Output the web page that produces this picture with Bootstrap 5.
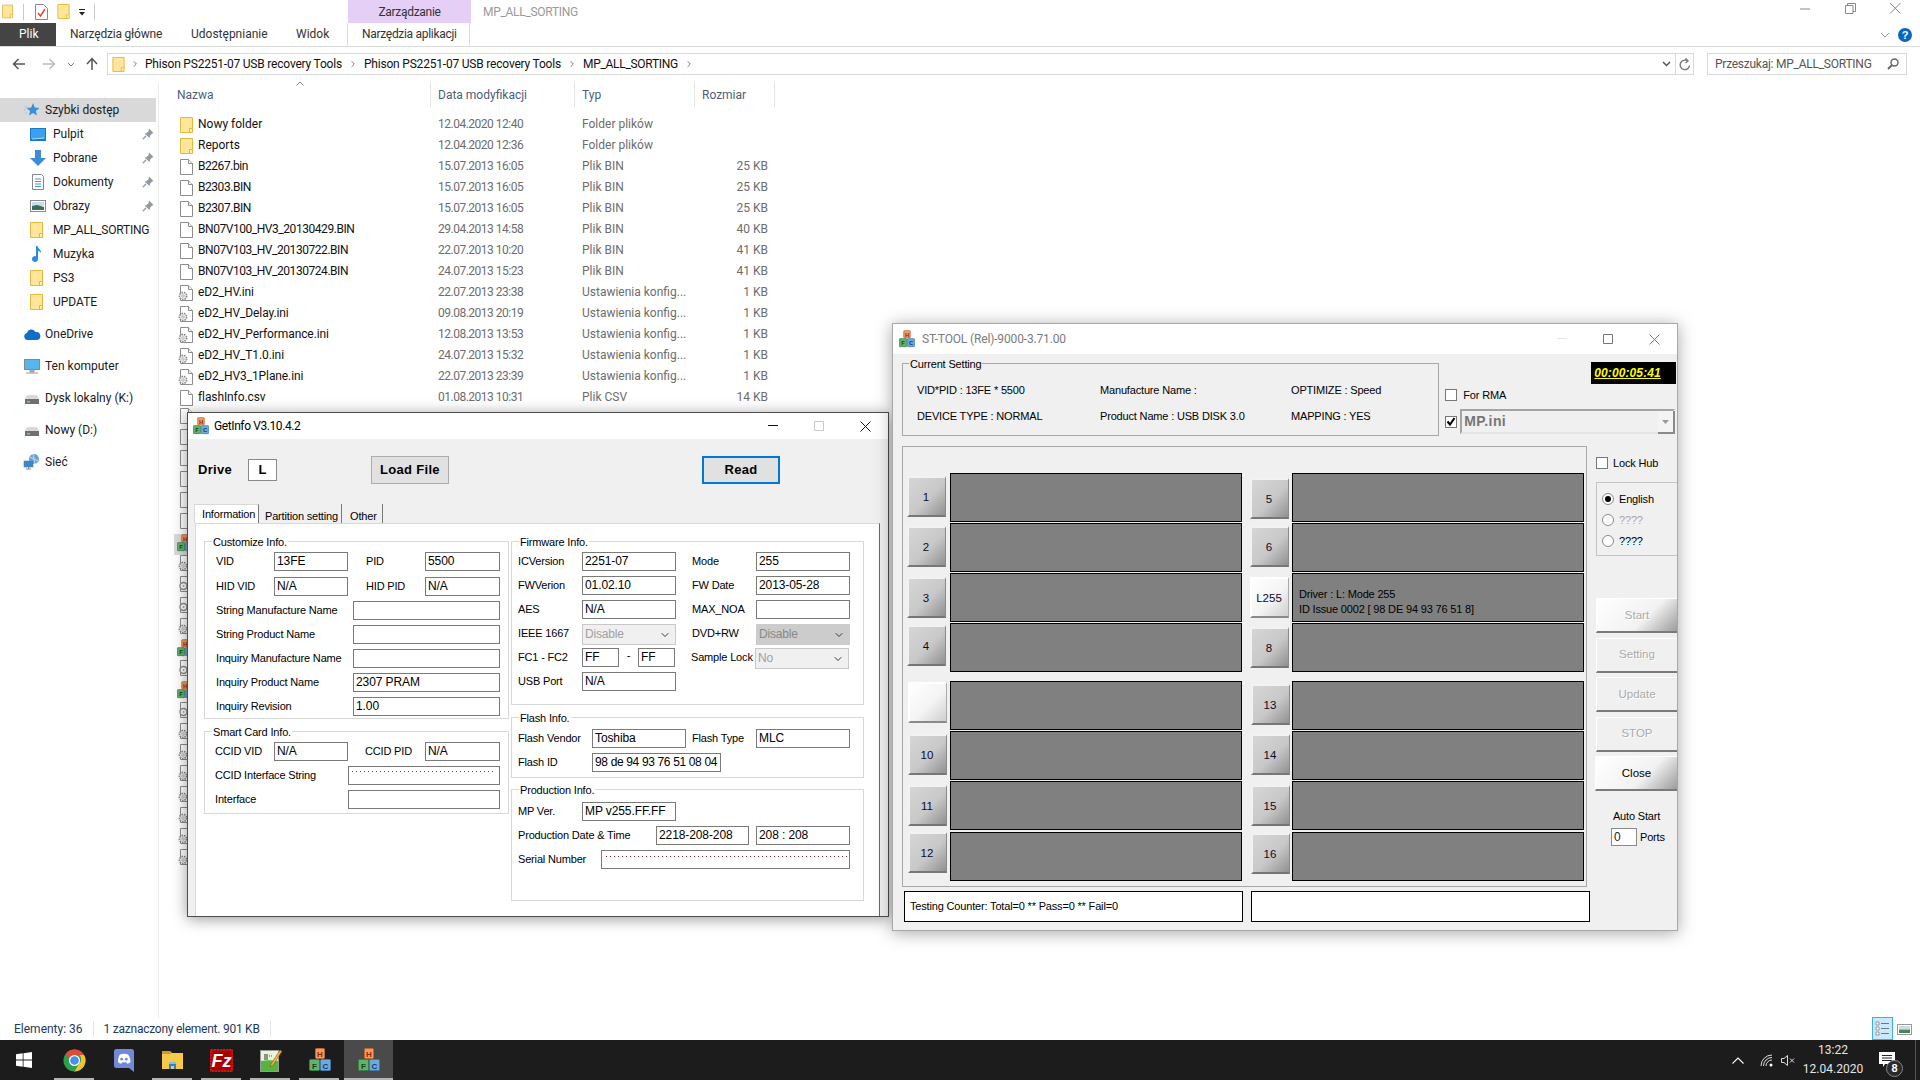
<!DOCTYPE html>
<html lang="pl">
<head>
<meta charset="UTF-8">
<title>MP_ALL_SORTING</title>
<link href="https://cdn.jsdelivr.net/npm/bootstrap@5.3.3/dist/css/bootstrap.min.css" rel="stylesheet">
<style>
html,body{width:1920px;height:1080px;overflow:hidden}
body{position:relative;background:#fff;color:#000;font:12px/16px Roboto,sans-serif}
svg{display:block;flex:none;overflow:visible}
.ml-2{margin-left:2px}
.ml-8{margin-left:8px}
.ml-9{margin-left:9px}
.ml-10{margin-left:10px}
.ml-11{margin-left:11px}
.ml-12{margin-left:12px}
.ml-16{margin-left:16px}
.tgt1{letter-spacing:-.2px}
.tgt2{letter-spacing:-.3px}

/* explorer chrome */
.ex-top{height:23px}
.ex-sep{width:1px;height:16px;background:#c8c8c8}
.ex-ctx{width:123px;height:23px;margin-left:253px;background:#e6cff7;color:#333;letter-spacing:-.3px}
.ex-title{margin-left:12px;color:#999;letter-spacing:-.3px}
.ex-wc{width:45px;height:23px}
.ex-wc-wrap{margin-right:2px;margin-top:-3px}
.ex-ribbon{height:24px;border-bottom:1px solid #dadbdc}
.ex-ribbon .nav-link{height:23px;padding:3px 0 0 14px;color:#333;font-size:12px;border:0}
.rb-file{width:56px;background:#444;color:#fff!important;padding-left:19px!important}
.rb-w1{width:121px;letter-spacing:-.2px}
.rb-w2{width:105px}
.rb-w3{width:65px}
.rb-ctx{width:123px;padding-left:14px!important;letter-spacing:-.3px;border-left:1px solid #dadbdc!important;border-right:1px solid #dadbdc!important}
.ex-addr{height:35px;padding-top:6px}
.ex-nav{width:107px;height:22px}
.ad-box{width:1587px;height:22px;border:1px solid #d9d9d9;color:#111;padding-left:4px}
.ad-end{width:18px;height:20px;border-left:1px solid #d9d9d9}
.ad-search{width:200px;height:22px;margin-left:13px;border:1px solid #d9d9d9;padding:0 7px;color:#555;letter-spacing:-.25px}
.ex-main{height:936px}
.ex-side{width:159px;padding-top:16px;border-right:1px solid #ececec;flex:none}
.sd-list .list-group-item{height:24px;width:156px;padding:0;border:0;background:transparent;color:#1b1b1b;font-size:12px;display:flex;align-items:center}
.sd-list .sd-on{background:#d9d9d9}
.sd-top{margin-top:8px}
.sd-l1{padding-left:30px!important}
.sd-l1 svg:first-child{margin-right:7px}
.sd-list .sd-l1 .sd-ic13{margin-right:10px}
.sd-list .sd-l1 .sd-ic14{margin-right:9px}
.sd-l0{padding-left:24px!important}
.sd-l0 svg:first-child{margin-right:5px}
.sd-pin{margin-left:auto;margin-right:2px}
.ex-files{position:relative;margin-left:15px}
.fh-row{height:25px;color:#4c607a}
.fh-c{border-right:1px solid #e5e5e5;line-height:26px;padding-left:7px}
.fh-c1{width:257px;padding-left:3px}
.fh-c2{width:144px}
.fh-c3{width:120px}
.fh-c4{width:80px}
.fh-caret{position:absolute;left:122px;top:-1px}
.flist{width:601px;table-layout:fixed;margin:7px 0 0;--bs-table-bg:transparent}
.flist>tbody>tr>td{padding:0 0 0 7px;height:21px;line-height:21px;color:#6d6d6d;border:0;white-space:nowrap;font-size:12px}
.flist>tbody>tr>td.fn{width:257px;padding-left:6px;color:#111}
.flist>tbody>tr>td.fd{letter-spacing:-.5px}
.flist>tbody>tr>td.fz{padding:0 7px 0 0;text-align:right}
.flist>tbody>tr.fsel>td{background:#d9d9d9}
.fcol2{width:144px}
.fcol3{width:120px}
.fn-in{display:flex;align-items:center;gap:5px}
.fn-b{letter-spacing:-.45px}
.fn-e{letter-spacing:-.1px}
.ic-neg{margin-left:-3px}
.ic-gear{margin-left:-2px}
.ex-status{height:22px;padding-left:14px;color:#1e395b}
.st-sep{width:1px;height:16px;background:#e5e5e5;margin:0 10px}
.st-msg{letter-spacing:-.25px}
.st-views{margin-left:auto;margin-right:8px}
.st-view-on{width:21px;height:23px;background:#cce8ff;border:1px solid #3daee9;margin-top:-1px}
.ex-task{height:40px;background:#1c1c1c;color:#e4e4e4}
.tb-start{width:50px;padding-left:16px}
.tb-slot{width:49px;height:40px;position:relative}
.tb-on{background:#4a4a4a}
.tb-run::after{content:"";position:absolute;left:4px;right:5px;bottom:0;height:2px;background:#b5b5b5}
.tb-on::after{left:0;right:0}
.tb-tray{margin-left:auto}
.tb-clock{width:70px;text-align:center;line-height:19px;margin:0 11px 0 3px}
.tb-bell{position:relative;width:30px;height:40px;margin-right:6px}
.tb-bubble{position:absolute;left:0;top:12px}
.tb-badge{position:absolute;left:7px;top:20px;width:17px;height:17px;border-radius:50%;background:#2a2a2a;border:1px solid #888;color:#fff;font:700 11px/15px "Liberation Sans",sans-serif;text-align:center}
.tb-peek{width:1px;height:40px;background:#555;margin-right:4px}

/* windows */
.wf-win{position:absolute;background:#f0f0f0;font:11px/14px "Liberation Sans",sans-serif;letter-spacing:-.17px;z-index:5}
.wf-gi{left:187px;top:412px;width:702px;height:505px;border:1px solid #4d4d4d;box-shadow:0 2px 14px rgba(0,0,0,.4)}
.wf-st{left:892px;top:323px;width:786px;height:608px;border:1px solid #a8a8a8;box-shadow:0 2px 16px rgba(0,0,0,.35)}
.wf-bar{background:#fff;font:12px/16px Roboto,sans-serif}
.wf-gi .wf-bar{height:26px;padding-left:5px;gap:5px;letter-spacing:-.4px}
.wf-st .wf-bar{height:30px;padding-left:6px;gap:7px;color:#7c7c7c;letter-spacing:-.15px}
.wf-wc{width:46px;height:24px}
.wf-bar-wc{margin-left:auto}

/* getinfo */
.gi-top{height:62px;margin-bottom:3px;padding-left:10px}
.gi-drive{width:50px;font:700 13px/16px "Liberation Sans",sans-serif;letter-spacing:.3px}
.gi-l{width:29px;height:22px;background:#fff;border:1px solid #8a8a8a;font:700 13px/20px "Liberation Sans",sans-serif;text-align:center}
.btn.gi-btn{width:78px;height:28px;padding:0;border-radius:0;background:#e1e1e1;border:1px solid #adadad;color:#000;font:700 13px/26px "Liberation Sans",sans-serif;letter-spacing:.3px}
.gi-load{margin-left:94px}
.btn.gi-read{margin-left:253px;border:2px solid #0078d7;line-height:24px}
.gi-tabs{margin-left:6px;height:19px;border:0;gap:1px;--bs-nav-tabs-border-width:0}
.gi-tabs .nav-link{height:19px;margin:0;padding:5px 0 0 5px;border:0;border-right:1px solid #777;border-radius:0;background:#f0f0f0;color:#000;font-size:11px;white-space:nowrap}
.gi-tabs .nav-link.active{background:#fff;padding:2px 0 0 7px;border-top:1px solid #d9d9d9;border-left:1px solid #d9d9d9;border-right-color:#777;border-bottom:0;color:#000}
.gi-t1{width:65px}
.gi-t2{width:82px}
.gi-tabs .nav-link.gi-t3{width:40px;padding-left:7px}
.gi-panel{width:685px;height:393px;margin-left:7px;background:#fff;border-top:1px solid #d9d9d9;border-left:1px solid #d9d9d9;border-right:1px solid #696969;padding:17px 0 0 8px;gap:2px}
.gi-left{width:305px}
.gi-right{width:353px}
.wf-group{position:relative;border:1px solid #d8d8d8}
.wf-legend{position:absolute;top:-7px;left:7px;padding:0 1px;background:#fff}
.g-cust{height:178px;padding:10px 0 0 11px;margin-bottom:12px}
.g-smart{height:83px;padding:10px 0 0 10px}
.g-firm{height:164px;padding:10px 0 0 6px;margin-bottom:12px}
.g-flash{height:61px;padding:11px 0 0 6px;margin-bottom:11px}
.g-prod{height:112px;padding:12px 0 0 6px}
.fr{height:19px;margin-bottom:5px}
.fr1{margin-bottom:6px}
.fl{flex:none;margin-top:-2px}
.form-control.wf-in{flex:none;height:19px;min-height:0;padding:1px 2px 0;border:1px solid #7a7a7a;border-radius:0;background:#fff;color:#000;font:12px/15px "Liberation Sans",sans-serif;letter-spacing:-.1px;white-space:nowrap}
.form-select.wf-sel{flex:none;height:21px;min-height:0;padding:2px 2px 0;border:1px solid #c8c8c8;border-radius:0;background-color:#f0f0f0;background-position:right 5px center;background-size:10px 8px;color:#a0a0a0;font:12px/15px "Liberation Sans",sans-serif}
.form-select.wf-sel-on{background-color:#ccc;color:#888;border-color:#ccc}
.form-control.wf-in.wf-dots{background:#fff repeating-linear-gradient(90deg,#444 0 1px,transparent 1px 4px) no-repeat 3px 4px/143px 1px}
.form-control.wf-in.wf-dots2{background:#fff repeating-linear-gradient(90deg,#802030 0 1px,transparent 1px 4px) no-repeat 4px 5px/241px 1px}
.form-control.wf-tight{letter-spacing:-.35px}
.ml16{margin-left:16px}
.ml18{margin-left:18px}
.ml17{margin-left:17px}
.ml6{margin-left:6px}
.ml7{margin-left:7px}
.w37{width:37px}
.w58{width:58px}
.w59{width:59px}
.w60{width:60px}
.w64{width:64px}
.w74{width:74px}
.w75{width:75px}
.w93{width:93px}
.w94{width:94px}
.w129{width:129px}
.w133{width:133px}
.w137{width:137px}
.w138{width:138px}
.w147{width:147px}
.w152{width:152px}
.w249{width:249px}
.w83{width:83px}
.wf-dash{width:19px;text-align:center}

/* st-tool */
.st-body{padding:9px 0 0 9px}
.st-top{height:83px}
.st-cur{width:538px;height:73px;padding:17px 0 0 14px;background:#f0f0f0;border:1px solid #a8a8a8}
.st-cur .wf-legend{background:#f0f0f0;left:6px;top:-7px}
.st-tr{height:18px;margin-bottom:8px}
.st-c1{width:183px}
.st-c2{width:191px}
.st-side{width:232px;margin-left:6px}
.st-timer{width:85px;height:22px;margin:-1px 0 0 146px;background:#000;color:#ff0;font:italic 700 12px/22px "Liberation Sans",sans-serif;text-decoration:underline;padding-left:3px;letter-spacing:.1px}
.st-rma{margin-top:5px;height:11px;gap:6px}
.form-check-input.wf-chk{width:12px;height:12px;margin:0;flex:none;border:1px solid #777;border-radius:0;background-color:#fff;box-shadow:none;float:none}
.form-check-input.wf-chk:checked{background-color:#fff;border-color:#777;background-image:url("data:image/svg+xml,%3csvg xmlns='http://www.w3.org/2000/svg' viewBox='0 0 12 12'%3e%3cpath fill='none' stroke='%23000' stroke-width='2' d='M2.5 5.5l2.5 3 4.5-6.5'/%3e%3c/svg%3e");background-size:12px}
.form-check-input.wf-rad{width:12px;height:12px;margin:0;flex:none;border:1px solid #8a8a8a;background-color:#fff;box-shadow:none;float:none}
.form-check-input.wf-rad:checked{background-color:#fff;border-color:#8a8a8a;background-image:url("data:image/svg+xml,%3csvg xmlns='http://www.w3.org/2000/svg' viewBox='-4 -4 8 8'%3e%3ccircle r='2' fill='%23000'/%3e%3c/svg%3e");background-size:12px}
.st-mp{margin-top:9px;gap:3px}
.st-combo{width:215px;height:25px;border:2px solid #a4a4a4;border-bottom-color:#e4e4e4;border-right-color:#e4e4e4;color:#777;font:700 14px/21px "Liberation Sans",sans-serif;padding-left:2px;letter-spacing:.4px}
.st-combo-btn{width:17px;height:23px;margin-left:auto;margin-right:-2px;background:#f4f4f4;border-right:2px solid #8a8a8a;border-bottom:2px solid #8a8a8a}
.st-mid{height:441px}
.st-panel{width:685px;padding:26px 0 0 4px;border:1px solid #a8a8a8;background:#f0f0f0}
.pt-row{gap:8px;margin-bottom:1px}
.pt-gap{margin-top:9px}
.pt-last{margin-top:2px}
.pt-l{width:335px}
.pt-r{width:334px}
.pt-box{width:292px;height:49px;background:gray;border:1.5px solid #000;color:#000;padding:13px 0 0 6px;line-height:15px;font-size:11px}
.btn.pt-btn{width:39px;height:41px;padding:0 2px 0 0;border-radius:0;border:0;border-top:2px solid #f2f2f2;border-left:2px solid #f2f2f2;border-bottom:2px solid #777;border-right:1px solid #8a8a8a;background:linear-gradient(135deg,#d6d6d6 0,#c8c8c8 55%,#909090 100%);color:#100828;font:11.5px/39px "Liberation Sans",sans-serif}
.btn.pt-on{background:linear-gradient(135deg,#fff 0,#f4f4f4 55%,#cfcfcf 100%);border-color:#fff #aaa #8a8a8a #fff}
.ot0{margin-top:0}
.ot1{margin-top:1px}
.ot2{margin-top:2px}
.ot3{margin-top:3px}
.ot4{margin-top:4px}
.ot5{margin-top:5px}
.ob1{margin-left:1px}
.st-right{width:81px;margin-left:9px;padding-top:11px}
.st-lock{height:12px;gap:5px}
.st-radios{width:81px;height:74px;margin-top:13px;border:1px solid #c4c4c4;border-right:0;padding:5px 0 0 5px}
.st-radio{height:21px;gap:5px}
.st-off{color:#a8a8a8}
.st-btns{margin-top:42px;gap:4.5px}
.btn.sb-btn{width:81px;height:35px;padding:0;border-radius:0;border:0;border-top:1px solid #fff;border-left:1px solid #fff;border-bottom:2px solid #7a7a7a;background:#f0f0f0;color:#aaa;font:11.5px/31px "Liberation Sans",sans-serif;text-shadow:1px 1px 0 #fff;opacity:1}
.btn.sb-grad{background:linear-gradient(135deg,#fff 0,#f2f2f2 60%,#9c9c9c 100%)}
.btn.sb-close{color:#000;text-shadow:none;width:82px;margin-left:-1px}
.st-auto{margin-top:18px;text-align:center}
.st-auto-r{margin-top:5px;padding-left:15px;gap:3px}
.form-control.st-port{width:26px;height:18px;min-height:0;padding:0 2px;border:1px solid #8a8a8a;border-radius:0;font:12px/16px "Liberation Sans",sans-serif;background:#fff}
.st-counts{margin:4px 0 0 2px;gap:8px}
.st-count{width:339px;height:31px;background:#fff;border:1px solid #000;padding-left:5px;line-height:29px}
</style>
</head>
<body class="d-flex flex-column">

<svg width="0" height="0" class="position-absolute">
  <symbol id="i-folder" viewBox="0 0 13 16"><path d="M.5.5h12v15H.5z" fill="#ffe69b" stroke="#e5b73c"/><path d="M9.5 15.500v-4h3" fill="#fff6d8" stroke="#e5b73c"/></symbol>
  <symbol id="i-file" viewBox="0 0 13 16"><path d="M.5.5h8l4 4v11H.5z" fill="#fff" stroke="#8c8c8c"/><path d="M8.5.5v4h4" fill="#f2f2f2" stroke="#8c8c8c"/></symbol>
  <symbol id="i-ini" viewBox="0 0 15 16"><path d="M2.5.5h8l4 4v11h-12z" fill="#fff" stroke="#8c8c8c"/><path d="M10.5.5v4h4" fill="#f2f2f2" stroke="#8c8c8c"/><circle cx="5" cy="11" r="3.600" fill="#eee" stroke="#888" stroke-width="1.600" stroke-dasharray="1.500 1"/><circle cx="5" cy="11" r="1.200" fill="#fff" stroke="#999" stroke-width=".7"/></symbol>
  <symbol id="i-ring" viewBox="0 0 15 16"><path d="M2.5.5h8l4 4v11h-12z" fill="#fff" stroke="#8c8c8c"/><path d="M10.5.5v4h4" fill="#f2f2f2" stroke="#8c8c8c"/><circle cx="5.500" cy="10" r="3.500" fill="#fff" stroke="#8c8c8c" stroke-width="1.400"/><circle cx="5.500" cy="10" r="1" fill="#aaa"/></symbol>
  <symbol id="i-mfc" viewBox="0 0 22 24">
    <rect x="6.500" y=".5" width="9" height="10" rx="1" fill="#f59a5c" stroke="#b96a2e"/><rect x=".5" y="11.500" width="10" height="11" rx="1" fill="#63b26b" stroke="#3b7d44"/><rect x="11.500" y="11.500" width="10" height="11" rx="1" fill="#6fa8dc" stroke="#3f78b0"/>
    <text x="11" y="9" font-size="8" font-weight="700" text-anchor="middle" fill="#8a2a10" font-family="Liberation Sans">H</text>
    <text x="5.500" y="20.500" font-size="8" font-weight="700" text-anchor="middle" fill="#123f18" font-family="Liberation Sans">F</text>
    <text x="16.500" y="20.500" font-size="8" font-weight="700" text-anchor="middle" fill="#123a66" font-family="Liberation Sans">C</text>
  </symbol>
  <symbol id="i-pin" viewBox="0 0 12 12"><path d="M7 .5l4.500 4.500-1.300.5-2.200 2.200-.3 2.300L2.300 5.500l2.300-.3 2-2.200z" fill="#8f9aa3"/><path d="M4 8L.8 11.200" stroke="#8f9aa3" stroke-width="1.300"/></symbol>
  <symbol id="i-drive" viewBox="0 0 16 16"><path d="M3 5h10l2 4H1z" fill="#d9d9d9"/><rect x="1" y="9" width="14" height="5" fill="#6f6f6f"/><rect x="3" y="11" width="3" height="1.500" fill="#62e06a"/></symbol>
  <symbol id="i-chev" viewBox="0 0 6 10"><path d="M1 1l4 4-4 4" fill="none" stroke="#555" stroke-width="1.200"/></symbol>
</svg>

<!-- explorer title row -->
<div class="ex-top d-flex align-items-start">
  <svg width="11" height="15" class="mt-1 ml-2"><use href="#i-folder"/></svg>
  <div class="ex-sep mt-1 ml-10"></div>
  <svg width="13" height="16" class="mt-1 ml-11" viewBox="0 0 13 16"><path d="M.5.5h8l4 4v11H.5z" fill="#fff" stroke="#888"/><path d="M3 9l2.500 3L10 5" fill="none" stroke="#d9442a" stroke-width="1.400"/></svg>
  <svg width="13" height="15" class="mt-1 ml-9"><use href="#i-folder"/></svg>
  <svg width="8" height="8" class="mt-2 ml-8" viewBox="0 0 8 8"><path d="M1 1.500h6" stroke="#222"/><path d="M1 4h6L4 7.500z" fill="#222"/></svg>
  <div class="ex-sep mt-1 ml-8"></div>
  <div class="ex-ctx text-center pt-1">Zarządzanie</div>
  <div class="ex-title pt-1">MP_ALL_SORTING</div>
  <div class="d-flex ms-auto ex-wc-wrap">
    <div class="ex-wc d-flex align-items-center justify-content-center"><svg width="11" height="11"><path d="M0 6h10" stroke="#888"/></svg></div>
    <div class="ex-wc d-flex align-items-center justify-content-center"><svg width="11" height="11"><path d="M.5 2.500h7.500v8h-7.500zM2.500 2.500v-2h8v8h-2.500" fill="none" stroke="#888"/></svg></div>
    <div class="ex-wc d-flex align-items-center justify-content-center"><svg width="11" height="11"><path d="M0 0l10.500 10.500M10.500 0L0 10.500" stroke="#888"/></svg></div>
  </div>
</div>

<!-- ribbon -->
<div class="ex-ribbon d-flex">
  <nav class="nav flex-nowrap">
    <a class="nav-link rb-file" href="#">Plik</a>
    <a class="nav-link rb-w1" href="#">Narzędzia główne</a>
    <a class="nav-link rb-w2" href="#">Udostępnianie</a>
    <a class="nav-link rb-w3" href="#">Widok</a>
    <a class="nav-link rb-ctx" href="#">Narzędzia aplikacji</a>
  </nav>
  <div class="d-flex align-items-center ms-auto">
    <svg width="10" height="6" viewBox="0 0 10 6" class="me-2"><path d="M1 1l4 4 4-4" fill="none" stroke="#999"/></svg>
    <svg width="14" height="14" viewBox="0 0 14 14" class="me-2"><circle cx="7" cy="7" r="7" fill="#0a66c2"/><text x="7" y="11" font-size="11" font-weight="700" fill="#fff" text-anchor="middle" font-family="Liberation Sans">?</text></svg>
  </div>
</div>

<!-- address row -->
<div class="ex-addr d-flex align-items-start">
  <div class="ex-nav d-flex align-items-center">
    <svg width="14" height="12" viewBox="0 0 14 12" class="ml-12"><path d="M13 6H2M6.500 1L1.500 6l5 5" fill="none" stroke="#555" stroke-width="1.500"/></svg>
    <svg width="14" height="12" viewBox="0 0 14 12" class="ml-16"><path d="M1 6h11M7.500 1l5 5-5 5" fill="none" stroke="#bbb" stroke-width="1.500"/></svg>
    <svg width="8" height="5" viewBox="0 0 8 5" class="ml-11"><path d="M1 1l3 3 3-3" fill="none" stroke="#777"/></svg>
    <svg width="12" height="14" viewBox="0 0 12 14" class="ml-11"><path d="M6 13V2M1 7l5-5.500L11 7" fill="none" stroke="#555" stroke-width="1.500"/></svg>
  </div>
  <div class="ad-box d-flex align-items-center">
    <svg width="13" height="15"><use href="#i-folder"/></svg>
    <svg width="4" height="8" class="ml-8"><use href="#i-chev"/></svg>
    <span class="ml-8 tgt1">Phison PS2251-07 USB recovery Tools</span>
    <svg width="4" height="8" class="ml-9"><use href="#i-chev"/></svg>
    <span class="ml-9 tgt1">Phison PS2251-07 USB recovery Tools</span>
    <svg width="4" height="8" class="ml-9"><use href="#i-chev"/></svg>
    <span class="ml-9 tgt2">MP_ALL_SORTING</span>
    <svg width="4" height="8" class="ml-9"><use href="#i-chev"/></svg>
    <svg width="9" height="6" viewBox="0 0 9 6" class="ms-auto me-1"><path d="M1 1l3.500 3.500L8 1" fill="none" stroke="#555" stroke-width="1.500"/></svg>
    <div class="ad-end d-flex align-items-center justify-content-center">
      <svg width="12" height="13" viewBox="0 0 12 13"><path d="M10.500 7.500a4.700 4.700 0 1 1-2-4.500M6.500.500l2.500 2.500-2.500 2" fill="none" stroke="#777" stroke-width="1.400"/></svg>
    </div>
  </div>
  <div class="ad-search d-flex align-items-center justify-content-between">
    <span>Przeszukaj: MP_ALL_SORTING</span>
    <svg width="12" height="12" viewBox="0 0 12 12"><circle cx="7.500" cy="4.500" r="3.500" fill="none" stroke="#666" stroke-width="1.400"/><path d="M5 7l-4 4" stroke="#666" stroke-width="2"/></svg>
  </div>
</div>

<!-- main -->
<div class="ex-main d-flex">
  <div class="ex-side">
    <div class="list-group list-group-flush sd-list">
      <div class="list-group-item sd-on sd-l0"><svg width="16" height="16" viewBox="0 0 16 16"><path d="M9 1l1.800 4.500 4.700.4-3.600 3 1.100 4.600L9 11l-4 2.500 1.100-4.600-3.600-3 4.700-.4z" fill="#3c8fd8"/><path d="M.5 5h3M0 8h2M1 11h2" stroke="#9cc6ea"/></svg>Szybki dostęp</div>
      <div class="list-group-item sd-l1"><svg width="16" height="13" viewBox="0 0 16 13"><rect width="16" height="13" fill="#1979ca"/><rect x="1" y="1" width="14" height="10" fill="#39a2ee"/><path d="M2 11l12-1" stroke="#fff" stroke-width=".6"/></svg>Pulpit<svg width="12" height="12" class="sd-pin"><use href="#i-pin"/></svg></div>
      <div class="list-group-item sd-l1"><svg width="16" height="16" viewBox="0 0 16 16"><path d="M5 0h6v8h5l-8 8-8-8h5z" fill="#3d8ad8"/></svg>Pobrane<svg width="12" height="12" class="sd-pin"><use href="#i-pin"/></svg></div>
      <div class="list-group-item sd-l1"><svg width="16" height="16" viewBox="0 0 16 16"><path d="M2.500.500h9l2 2v13h-11z" fill="#fff" stroke="#888"/><path d="M5 5h6M5 7.500h6M5 10h6M5 12.500h6" stroke="#4a90d9"/></svg>Dokumenty<svg width="12" height="12" class="sd-pin"><use href="#i-pin"/></svg></div>
      <div class="list-group-item sd-l1"><svg width="16" height="12" viewBox="0 0 16 12"><rect x=".5" y=".5" width="15" height="11" fill="#fff" stroke="#8a8a8a"/><rect x="2" y="2" width="12" height="4" fill="#c9dcec"/><path d="M2 6l5-1 7 2v3H2z" fill="#3c6b58"/></svg>Obrazy<svg width="12" height="12" class="sd-pin"><use href="#i-pin"/></svg></div>
      <div class="list-group-item sd-l1 tgt1"><svg width="13" height="16" class="sd-ic13"><use href="#i-folder"/></svg>MP_ALL_SORTING</div>
      <div class="list-group-item sd-l1"><svg width="14" height="16" viewBox="0 0 14 16" class="sd-ic14"><path d="M6 0h1.500c.5 3 4 3.500 3.500 7-1-1.500-2-2-3-2v8a3 3 0 1 1-2-2.800z" fill="#2b8be0"/></svg>Muzyka</div>
      <div class="list-group-item sd-l1"><svg width="13" height="16" class="sd-ic13"><use href="#i-folder"/></svg>PS3</div>
      <div class="list-group-item sd-l1"><svg width="13" height="16" class="sd-ic13"><use href="#i-folder"/></svg>UPDATE</div>
      <div class="list-group-item sd-l0 sd-top"><svg width="16" height="11" viewBox="0 0 16 11"><path d="M3.500 11a3.500 3.500 0 0 1-.5-6.900A4.500 4.500 0 0 1 11.500 3 4 4 0 0 1 13 11z" fill="#0f6fc6"/></svg>OneDrive</div>
      <div class="list-group-item sd-l0 sd-top"><svg width="16" height="15" viewBox="0 0 16 15"><rect x=".5" y=".5" width="15" height="10" fill="#55b7ee" stroke="#888"/><path d="M6 11h4v2H6zM2 14h12" stroke="#999" fill="#bbb"/></svg>Ten komputer</div>
      <div class="list-group-item sd-l0 sd-top"><svg width="16" height="16"><use href="#i-drive"/></svg>Dysk lokalny (K:)</div>
      <div class="list-group-item sd-l0 sd-top"><svg width="16" height="16"><use href="#i-drive"/></svg>Nowy (D:)</div>
      <div class="list-group-item sd-l0 sd-top"><svg width="16" height="16" viewBox="0 0 16 16"><circle cx="10" cy="5" r="5" fill="#6aa4d8"/><path d="M6 3l8 4M9 0l2 10" stroke="#cfe4f6" stroke-width=".8"/><rect x="0" y="7" width="9" height="6" fill="#2f8ad8" stroke="#777" stroke-width=".6"/><path d="M2 15h5M4.500 13v2" stroke="#888"/></svg>Sieć</div>
    </div>
  </div>

  <div class="ex-files">
    <div class="fh-row d-flex">
      <div class="fh-c fh-c1">Nazwa</div>
      <div class="fh-c fh-c2">Data modyfikacji</div>
      <div class="fh-c fh-c3">Typ</div>
      <div class="fh-c fh-c4">Rozmiar</div>
    </div>
    <svg class="fh-caret" width="8" height="5" viewBox="0 0 8 5"><path d="M.5 4.500L4 1l3.500 3.500" fill="none" stroke="#888"/></svg>
    <table class="table table-borderless flist">
      <colgroup><col><col class="fcol2"><col class="fcol3"><col></colgroup>
      <tbody>
        <tr><td class="fn"><div class="fn-in"><svg width="13" height="16"><use href="#i-folder"/></svg>Nowy folder</div></td><td class="fd">12.04.2020 12:40</td><td>Folder plików</td><td class="fz"></td></tr>
        <tr><td class="fn"><div class="fn-in"><svg width="13" height="16"><use href="#i-folder"/></svg>Reports</div></td><td class="fd">12.04.2020 12:36</td><td>Folder plików</td><td class="fz"></td></tr>
        <tr><td class="fn"><div class="fn-in fn-b"><svg width="13" height="16"><use href="#i-file"/></svg>B2267.bin</div></td><td class="fd">15.07.2013 16:05</td><td>Plik BIN</td><td class="fz">25 KB</td></tr>
        <tr><td class="fn"><div class="fn-in fn-b"><svg width="13" height="16"><use href="#i-file"/></svg>B2303.BIN</div></td><td class="fd">15.07.2013 16:05</td><td>Plik BIN</td><td class="fz">25 KB</td></tr>
        <tr><td class="fn"><div class="fn-in fn-b"><svg width="13" height="16"><use href="#i-file"/></svg>B2307.BIN</div></td><td class="fd">15.07.2013 16:05</td><td>Plik BIN</td><td class="fz">25 KB</td></tr>
        <tr><td class="fn"><div class="fn-in fn-b"><svg width="13" height="16"><use href="#i-file"/></svg>BN07V100_HV3_20130429.BIN</div></td><td class="fd">29.04.2013 14:58</td><td>Plik BIN</td><td class="fz">40 KB</td></tr>
        <tr><td class="fn"><div class="fn-in fn-b"><svg width="13" height="16"><use href="#i-file"/></svg>BN07V103_HV_20130722.BIN</div></td><td class="fd">22.07.2013 10:20</td><td>Plik BIN</td><td class="fz">41 KB</td></tr>
        <tr><td class="fn"><div class="fn-in fn-b"><svg width="13" height="16"><use href="#i-file"/></svg>BN07V103_HV_20130724.BIN</div></td><td class="fd">24.07.2013 15:23</td><td>Plik BIN</td><td class="fz">41 KB</td></tr>
        <tr><td class="fn"><div class="fn-in fn-e"><svg class="ic-gear" width="15" height="16"><use href="#i-ini"/></svg>eD2_HV.ini</div></td><td class="fd">22.07.2013 23:38</td><td>Ustawienia konfig...</td><td class="fz">1 KB</td></tr>
        <tr><td class="fn"><div class="fn-in fn-e"><svg class="ic-gear" width="15" height="16"><use href="#i-ini"/></svg>eD2_HV_Delay.ini</div></td><td class="fd">09.08.2013 20:19</td><td>Ustawienia konfig...</td><td class="fz">1 KB</td></tr>
        <tr><td class="fn"><div class="fn-in fn-e"><svg class="ic-gear" width="15" height="16"><use href="#i-ini"/></svg>eD2_HV_Performance.ini</div></td><td class="fd">12.08.2013 13:53</td><td>Ustawienia konfig...</td><td class="fz">1 KB</td></tr>
        <tr><td class="fn"><div class="fn-in fn-e"><svg class="ic-gear" width="15" height="16"><use href="#i-ini"/></svg>eD2_HV_T1.0.ini</div></td><td class="fd">24.07.2013 15:32</td><td>Ustawienia konfig...</td><td class="fz">1 KB</td></tr>
        <tr><td class="fn"><div class="fn-in fn-e"><svg class="ic-gear" width="15" height="16"><use href="#i-ini"/></svg>eD2_HV3_1Plane.ini</div></td><td class="fd">22.07.2013 23:39</td><td>Ustawienia konfig...</td><td class="fz">1 KB</td></tr>
        <tr><td class="fn"><div class="fn-in fn-e"><svg width="13" height="16"><use href="#i-file"/></svg>flashInfo.csv</div></td><td class="fd">01.08.2013 10:31</td><td>Plik CSV</td><td class="fz">14 KB</td></tr>
      </tbody>
      <tbody id="hidden-rows"></tbody>
    </table>
  </div>
</div>

<!-- status bar -->
<div class="ex-status d-flex align-items-center">
  <span>Elementy: 36</span><div class="st-sep"></div><span class="st-msg">1 zaznaczony element. 901 KB</span><div class="st-sep"></div>
  <div class="st-views d-flex align-items-center gap-1">
    <div class="st-view-on d-flex align-items-center justify-content-center"><svg width="15" height="15" viewBox="0 0 15 15"><path d="M1 1h3v3H1zM1 6h3v3H1zM1 11h3v3H1z" fill="#fff" stroke="#777" stroke-width=".7"/><path d="M6 2.500h8M6 7.500h8M6 12.500h8" stroke="#777"/></svg></div>
    <svg width="15" height="11" viewBox="0 0 15 11"><rect x=".5" y=".5" width="14" height="10" fill="#fff" stroke="#999"/><rect x="2" y="2" width="11" height="3" fill="#c9dcec"/><path d="M2 5.500h11V9H2z" fill="#4b8060"/></svg>
  </div>
</div>

<!-- taskbar -->
<div class="ex-task d-flex align-items-center">
  <div class="tb-start"><svg width="16" height="16" viewBox="0 0 16 16"><path d="M0 2.300l6.700-1v6.300H0zM7.500 1.200L16 0v7.600H7.500zM0 8.400h6.700v6.300L0 13.700zM7.500 8.400H16V16l-8.500-1.200z" fill="#fff"/></svg></div>
  <div class="tb-slot tb-run d-flex align-items-center justify-content-center">
    <svg width="23" height="23" viewBox="0 0 24 24"><circle cx="12" cy="12" r="11.500" fill="#2e9f4b"/><path d="M12 .5a11.500 11.500 0 0 1 10 5.800H12a5.700 5.700 0 0 0-5.400 4L2.900 5A11.500 11.500 0 0 1 12 .5z" fill="#dd4b39"/><path d="M22 6.300A11.500 11.500 0 0 1 12 23.500l5-8.500a5.700 5.700 0 0 0 0-8.700z" fill="#fbc02d"/><circle cx="12" cy="12" r="5.800" fill="#fff"/><circle cx="12" cy="12" r="4.500" fill="#4a8ef0"/></svg>
  </div>
  <div class="tb-slot d-flex align-items-center justify-content-center">
    <svg width="20" height="23" viewBox="0 0 20 23"><path d="M2.500 0h15A2.500 2.500 0 0 1 20 2.500V23l-5-4H2.500A2.500 2.500 0 0 1 0 16.500v-14A2.500 2.500 0 0 1 2.500 0z" fill="#7289da"/><path d="M6 5.500c2.500-1 5.500-1 8 0 1.500 2 2.500 4.500 2.500 7.500-1 1-2.500 1.500-3.500 1.500l-.8-1.300H8.300l-.8 1.300C6.500 14.500 5 14 4 13c0-3 .5-5.500 2-7.500z" fill="#fff"/><circle cx="7.700" cy="10.200" r="1.400" fill="#7289da"/><circle cx="12.300" cy="10.200" r="1.400" fill="#7289da"/></svg>
  </div>
  <div class="tb-slot tb-run d-flex align-items-center justify-content-center">
    <svg width="21" height="18" viewBox="0 0 21 18"><path d="M0 0h8l2 2h11v16H0z" fill="#f7c948"/><path d="M0 0h8l1 3H0z" fill="#d7952a"/><path d="M7 11h7v7h-2v-3H9v3H7z" fill="#2a83d6"/><path d="M7 11h7v2H7z" fill="#7cc0ef"/></svg>
  </div>
  <div class="tb-slot tb-run d-flex align-items-center justify-content-center">
    <svg width="23" height="23" viewBox="0 0 23 23"><rect width="23" height="23" fill="#b40000"/><rect x="1" y="1" width="21" height="21" fill="#a80000" stroke="#d03030" stroke-dasharray="2 1"/><text x="11.500" y="18" font-size="18" font-weight="700" font-style="italic" fill="#fff" text-anchor="middle" font-family="Liberation Sans">Fz</text></svg>
  </div>
  <div class="tb-slot tb-run d-flex align-items-center justify-content-center">
    <svg width="22" height="24" viewBox="0 0 22 24"><rect x=".5" y="2.500" width="18" height="21" fill="#e9f5d8" stroke="#999"/><path d="M1 13c5-1 11-1 17 0v10H1z" fill="#55b33f"/><path d="M5 6v6M7 6v6" stroke="#333"/><path d="M9 8h4" stroke="#555" stroke-dasharray="1 1"/><path d="M11 16L20 2l2 1.300-9 14-3 1.500z" fill="#f2b233" stroke="#7a4d10" stroke-width=".5"/></svg>
  </div>
  <div class="tb-slot tb-run d-flex align-items-center justify-content-center"><svg width="22" height="24"><use href="#i-mfc"/></svg></div>
  <div class="tb-slot tb-run tb-on d-flex align-items-center justify-content-center"><svg width="22" height="24"><use href="#i-mfc"/></svg></div>

  <div class="tb-tray d-flex align-items-center">
    <svg width="12" height="7" viewBox="0 0 12 7" class="me-3"><path d="M.5 6.500L6 1l5.500 5.500" fill="none" stroke="#fff" stroke-width="1.100"/></svg>
    <svg width="13" height="13" viewBox="0 0 13 13" class="me-2"><path d="M1 12a11 11 0 0 1 11-11M3.500 12a8.500 8.500 0 0 1 8.500-8.500M6 12a6 6 0 0 1 6-6" fill="none" stroke="#ddd"/><circle cx="11" cy="11" r="1.500" fill="#fff"/></svg>
    <svg width="14" height="11" viewBox="0 0 14 11"><path d="M.5 3.500h2.500L6.500.5v10L3 7.500H.5z" fill="none" stroke="#ddd"/><path d="M9 3.500l4 4M13 3.500l-4 4" stroke="#ddd"/></svg>
    <div class="tb-clock">13:22<br>12.04.2020</div>
    <div class="tb-bell">
      <svg width="16" height="15" viewBox="0 0 16 15" class="tb-bubble"><path d="M0 0h16v12H6l-2 3v-3H0z" fill="#fff"/><path d="M3 3.500h10M3 6h10M3 8.500h10" stroke="#222"/></svg>
      <div class="tb-badge">8</div>
    </div>
    <div class="tb-peek"></div>
  </div>
</div>

<!-- GetInfo window -->
<div class="wf-win wf-gi d-flex flex-column">
  <div class="wf-bar d-flex align-items-center">
    <svg width="16" height="18"><use href="#i-mfc"/></svg>
    <span>GetInfo V3.10.4.2</span>
    <div class="d-flex wf-bar-wc">
      <div class="wf-wc d-flex align-items-center justify-content-center"><svg width="10" height="2"><path d="M0 .5h10" stroke="#111"/></svg></div>
      <div class="wf-wc d-flex align-items-center justify-content-center"><svg width="10" height="10"><path d="M.5.500h9v9h-9z" fill="none" stroke="#c8c8c8"/></svg></div>
      <div class="wf-wc d-flex align-items-center justify-content-center"><svg width="11" height="11"><path d="M.5.500l10 10M10.500.500l-10 10" stroke="#111"/></svg></div>
    </div>
  </div>
  <div class="gi-top d-flex align-items-center">
    <div class="gi-drive">Drive</div>
    <div class="gi-l">L</div>
    <button class="btn gi-btn gi-load">Load File</button>
    <button class="btn gi-btn gi-read">Read</button>
  </div>
  <ul class="nav nav-tabs gi-tabs flex-nowrap">
    <li class="nav-item"><a class="nav-link active gi-t1" href="#">Information</a></li>
    <li class="nav-item"><a class="nav-link gi-t2" href="#">Partition setting</a></li>
    <li class="nav-item"><a class="nav-link gi-t3" href="#">Other</a></li>
  </ul>
  <div class="gi-panel d-flex">
    <div class="gi-left">
      <div class="wf-group g-cust">
        <div class="wf-legend">Customize Info.</div>
        <div class="fr fr1 d-flex align-items-center"><div class="fl w58">VID</div><div class="form-control wf-in w74">13FE</div><div class="fl ml18 w59">PID</div><div class="form-control wf-in w75">5500</div></div>
        <div class="fr d-flex align-items-center"><div class="fl w58">HID VID</div><div class="form-control wf-in w74">N/A</div><div class="fl ml18 w59">HID PID</div><div class="form-control wf-in w75">N/A</div></div>
        <div class="fr d-flex align-items-center"><div class="fl w137">String Manufacture Name</div><div class="form-control wf-in w147"></div></div>
        <div class="fr d-flex align-items-center"><div class="fl w137">String Product Name</div><div class="form-control wf-in w147"></div></div>
        <div class="fr d-flex align-items-center"><div class="fl w137">Inquiry Manufacture Name</div><div class="form-control wf-in w147"></div></div>
        <div class="fr d-flex align-items-center"><div class="fl w137">Inquiry Product Name</div><div class="form-control wf-in w147">2307 PRAM</div></div>
        <div class="fr d-flex align-items-center"><div class="fl w137">Inquiry Revision</div><div class="form-control wf-in w147">1.00</div></div>
      </div>
      <div class="wf-group g-smart">
        <div class="wf-legend">Smart Card Info.</div>
        <div class="fr d-flex align-items-center"><div class="fl w59">CCID VID</div><div class="form-control wf-in w74">N/A</div><div class="fl ml17 w60">CCID PID</div><div class="form-control wf-in w75">N/A</div></div>
        <div class="fr d-flex align-items-center"><div class="fl w133">CCID Interface String</div><div class="form-control wf-in wf-dots w152"></div></div>
        <div class="fr d-flex align-items-center"><div class="fl w133">Interface</div><div class="form-control wf-in w152"></div></div>
      </div>
    </div>
    <div class="gi-right">
      <div class="wf-group g-firm">
        <div class="wf-legend">Firmware Info.</div>
        <div class="fr d-flex align-items-center"><div class="fl w64">ICVersion</div><div class="form-control wf-in w94">2251-07</div><div class="fl ml16 w64">Mode</div><div class="form-control wf-in w94">255</div></div>
        <div class="fr d-flex align-items-center"><div class="fl w64">FWVerion</div><div class="form-control wf-in w94">01.02.10</div><div class="fl ml16 w64">FW Date</div><div class="form-control wf-in w94">2013-05-28</div></div>
        <div class="fr d-flex align-items-center"><div class="fl w64">AES</div><div class="form-control wf-in w94">N/A</div><div class="fl ml16 w64">MAX_NOA</div><div class="form-control wf-in w94"></div></div>
        <div class="fr d-flex align-items-start"><div class="fl w64 pt-1">IEEE 1667</div><div class="form-select wf-sel w94">Disable</div><div class="fl ml16 w64 pt-1">DVD+RW</div><div class="form-select wf-sel wf-sel-on w94">Disable</div></div>
        <div class="fr d-flex align-items-start"><div class="fl w64 pt-1">FC1 - FC2</div><div class="form-control wf-in w37">FF</div><div class="wf-dash">-</div><div class="form-control wf-in w37">FF</div><div class="fl ml16 w64 pt-1">Sample Lock</div><div class="form-select wf-sel w94">No</div></div>
        <div class="fr d-flex align-items-center"><div class="fl w64">USB Port</div><div class="form-control wf-in w94">N/A</div></div>
      </div>
      <div class="wf-group g-flash">
        <div class="wf-legend">Flash Info.</div>
        <div class="fr d-flex align-items-center"><div class="fl w74">Flash Vendor</div><div class="form-control wf-in w94">Toshiba</div><div class="fl ml6 w64">Flash Type</div><div class="form-control wf-in w94">MLC</div></div>
        <div class="fr d-flex align-items-center"><div class="fl w74">Flash ID</div><div class="form-control wf-in wf-tight w129">98 de 94 93 76 51 08 04</div></div>
      </div>
      <div class="wf-group g-prod">
        <div class="wf-legend">Production Info.</div>
        <div class="fr d-flex align-items-center"><div class="fl w64">MP Ver.</div><div class="form-control wf-in w94">MP v255.FF.FF</div></div>
        <div class="fr d-flex align-items-center"><div class="fl w138">Production Date &amp; Time</div><div class="form-control wf-in w93">2218-208-208</div><div class="form-control wf-in w94 ml7">208 : 208</div></div>
        <div class="fr d-flex align-items-center"><div class="fl w83">Serial Number</div><div class="form-control wf-in wf-dots2 w249"></div></div>
      </div>
    </div>
  </div>
</div>

<!-- ST-TOOL window -->
<div class="wf-win wf-st d-flex flex-column">
  <div class="wf-bar d-flex align-items-center">
    <svg width="16" height="18"><use href="#i-mfc"/></svg>
    <span>ST-TOOL (Rel)-9000-3.71.00</span>
    <div class="d-flex wf-bar-wc">
      <div class="wf-wc d-flex align-items-center justify-content-center"><svg width="10" height="2"><path d="M0 .5h10" stroke="#e2e2e2"/></svg></div>
      <div class="wf-wc d-flex align-items-center justify-content-center"><svg width="10" height="10"><path d="M.5.500h9v9h-9z" fill="none" stroke="#777"/></svg></div>
      <div class="wf-wc d-flex align-items-center justify-content-center"><svg width="11" height="11"><path d="M.5.500l10 10M10.500.500l-10 10" stroke="#777"/></svg></div>
    </div>
  </div>
  <div class="st-body">
    <div class="st-top d-flex">
      <div class="st-cur wf-group">
        <div class="wf-legend">Current Setting</div>
        <div class="st-tr d-flex align-items-center"><div class="st-c1">VID*PID : 13FE * 5500</div><div class="st-c2">Manufacture Name :</div><div>OPTIMIZE : Speed</div></div>
        <div class="st-tr d-flex align-items-center"><div class="st-c1">DEVICE TYPE : NORMAL</div><div class="st-c2">Product Name : USB DISK 3.0</div><div>MAPPING : YES</div></div>
      </div>
      <div class="st-side">
        <div class="st-timer">00:00:05:41</div>
        <div class="st-rma d-flex align-items-center"><input class="form-check-input wf-chk" type="checkbox"><span>For RMA</span></div>
        <div class="st-mp d-flex align-items-center">
          <input class="form-check-input wf-chk" type="checkbox" checked>
          <div class="st-combo d-flex">MP.ini
            <div class="st-combo-btn d-flex align-items-center justify-content-center"><svg width="7" height="4" viewBox="0 0 7 4"><path d="M0 0h7L3.500 4z" fill="#999"/></svg></div>
          </div>
        </div>
      </div>
    </div>
    <div class="st-mid d-flex">
      <div class="st-panel">
        <div class="pt-row d-flex">
          <div class="pt-l d-flex justify-content-between align-items-start"><button class="btn pt-btn ot3">1</button><div class="pt-box"></div></div>
          <div class="pt-r d-flex justify-content-between align-items-start"><button class="btn pt-btn ot5">5</button><div class="pt-box"></div></div>
        </div>
        <div class="pt-row d-flex">
          <div class="pt-l d-flex justify-content-between align-items-start"><button class="btn pt-btn ot3">2</button><div class="pt-box"></div></div>
          <div class="pt-r d-flex justify-content-between align-items-start"><button class="btn pt-btn ot3">6</button><div class="pt-box"></div></div>
        </div>
        <div class="pt-row d-flex">
          <div class="pt-l d-flex justify-content-between align-items-start"><button class="btn pt-btn ot4">3</button><div class="pt-box"></div></div>
          <div class="pt-r d-flex justify-content-between align-items-start"><button class="btn pt-btn pt-on ot4">L255</button><div class="pt-box">Driver : L: Mode 255<br>ID Issue 0002 [ 98 DE 94 93 76 51 8]</div></div>
        </div>
        <div class="pt-row d-flex">
          <div class="pt-l d-flex justify-content-between align-items-start"><button class="btn pt-btn ot2">4</button><div class="pt-box"></div></div>
          <div class="pt-r d-flex justify-content-between align-items-start"><button class="btn pt-btn ot4">8</button><div class="pt-box"></div></div>
        </div>
        <div class="pt-row pt-gap d-flex">
          <div class="pt-l d-flex justify-content-between align-items-start"><button class="btn pt-btn pt-on ot1 ob1"></button><div class="pt-box"></div></div>
          <div class="pt-r d-flex justify-content-between align-items-start"><button class="btn pt-btn ot3 ob1">13</button><div class="pt-box"></div></div>
        </div>
        <div class="pt-row d-flex">
          <div class="pt-l d-flex justify-content-between align-items-start"><button class="btn pt-btn ot3 ob1">10</button><div class="pt-box"></div></div>
          <div class="pt-r d-flex justify-content-between align-items-start"><button class="btn pt-btn ot3 ob1">14</button><div class="pt-box"></div></div>
        </div>
        <div class="pt-row d-flex">
          <div class="pt-l d-flex justify-content-between align-items-start"><button class="btn pt-btn ot4 ob1">11</button><div class="pt-box"></div></div>
          <div class="pt-r d-flex justify-content-between align-items-start"><button class="btn pt-btn ot4 ob1">15</button><div class="pt-box"></div></div>
        </div>
        <div class="pt-row pt-last d-flex">
          <div class="pt-l d-flex justify-content-between align-items-start"><button class="btn pt-btn ot0 ob1">12</button><div class="pt-box"></div></div>
          <div class="pt-r d-flex justify-content-between align-items-start"><button class="btn pt-btn ot1 ob1">16</button><div class="pt-box"></div></div>
        </div>
      </div>
      <div class="st-right">
        <div class="st-lock d-flex align-items-center"><input class="form-check-input wf-chk" type="checkbox"><span>Lock Hub</span></div>
        <div class="st-radios">
          <div class="st-radio d-flex align-items-center"><input class="form-check-input wf-rad" type="radio" checked><span>English</span></div>
          <div class="st-radio st-off d-flex align-items-center"><input class="form-check-input wf-rad" type="radio"><span>????</span></div>
          <div class="st-radio d-flex align-items-center"><input class="form-check-input wf-rad" type="radio"><span>????</span></div>
        </div>
        <div class="st-btns d-flex flex-column">
          <button class="btn sb-btn sb-grad">Start</button>
          <button class="btn sb-btn">Setting</button>
          <button class="btn sb-btn">Update</button>
          <button class="btn sb-btn">STOP</button>
          <button class="btn sb-btn sb-grad sb-close">Close</button>
        </div>
        <div class="st-auto">Auto Start</div>
        <div class="st-auto-r d-flex align-items-center"><div class="form-control st-port">0</div><span>Ports</span></div>
      </div>
    </div>
    <div class="st-counts d-flex">
      <div class="st-count">Testing Counter: Total=0 ** Pass=0 ** Fail=0</div>
      <div class="st-count"></div>
    </div>
  </div>
</div>

<script>
    // rows of the file list that only peek out left of the GetInfo window
    const kinds = ['file','file','file','file','file','file','mfc','ini','ring','ring','ini','mfc','ring','mfc','ring','ini','ini','ini','ini','ini','ini','ini'];
    const rowsHtml = kinds.map(kind => {
        let icon = `<svg class="ic-gear" width="15" height="16"><use href="#i-${kind}"/></svg>`;
        if (kind === 'file') icon = '<svg width="13" height="16"><use href="#i-file"/></svg>';
        if (kind === 'mfc') icon = '<svg class="ic-neg" width="16" height="18"><use href="#i-mfc"/></svg>';
        return `<tr><td class="fn"><div class="fn-in">${icon}</div></td><td></td><td></td><td></td></tr>`;
    }).join('');
    document.getElementById('hidden-rows').innerHTML = rowsHtml;
    document.querySelector('#hidden-rows tr:nth-child(7)').classList.add('fsel');
</script>
<script src="https://cdn.jsdelivr.net/npm/bootstrap@5.3.3/dist/js/bootstrap.bundle.min.js"></script>
</body>
</html>
